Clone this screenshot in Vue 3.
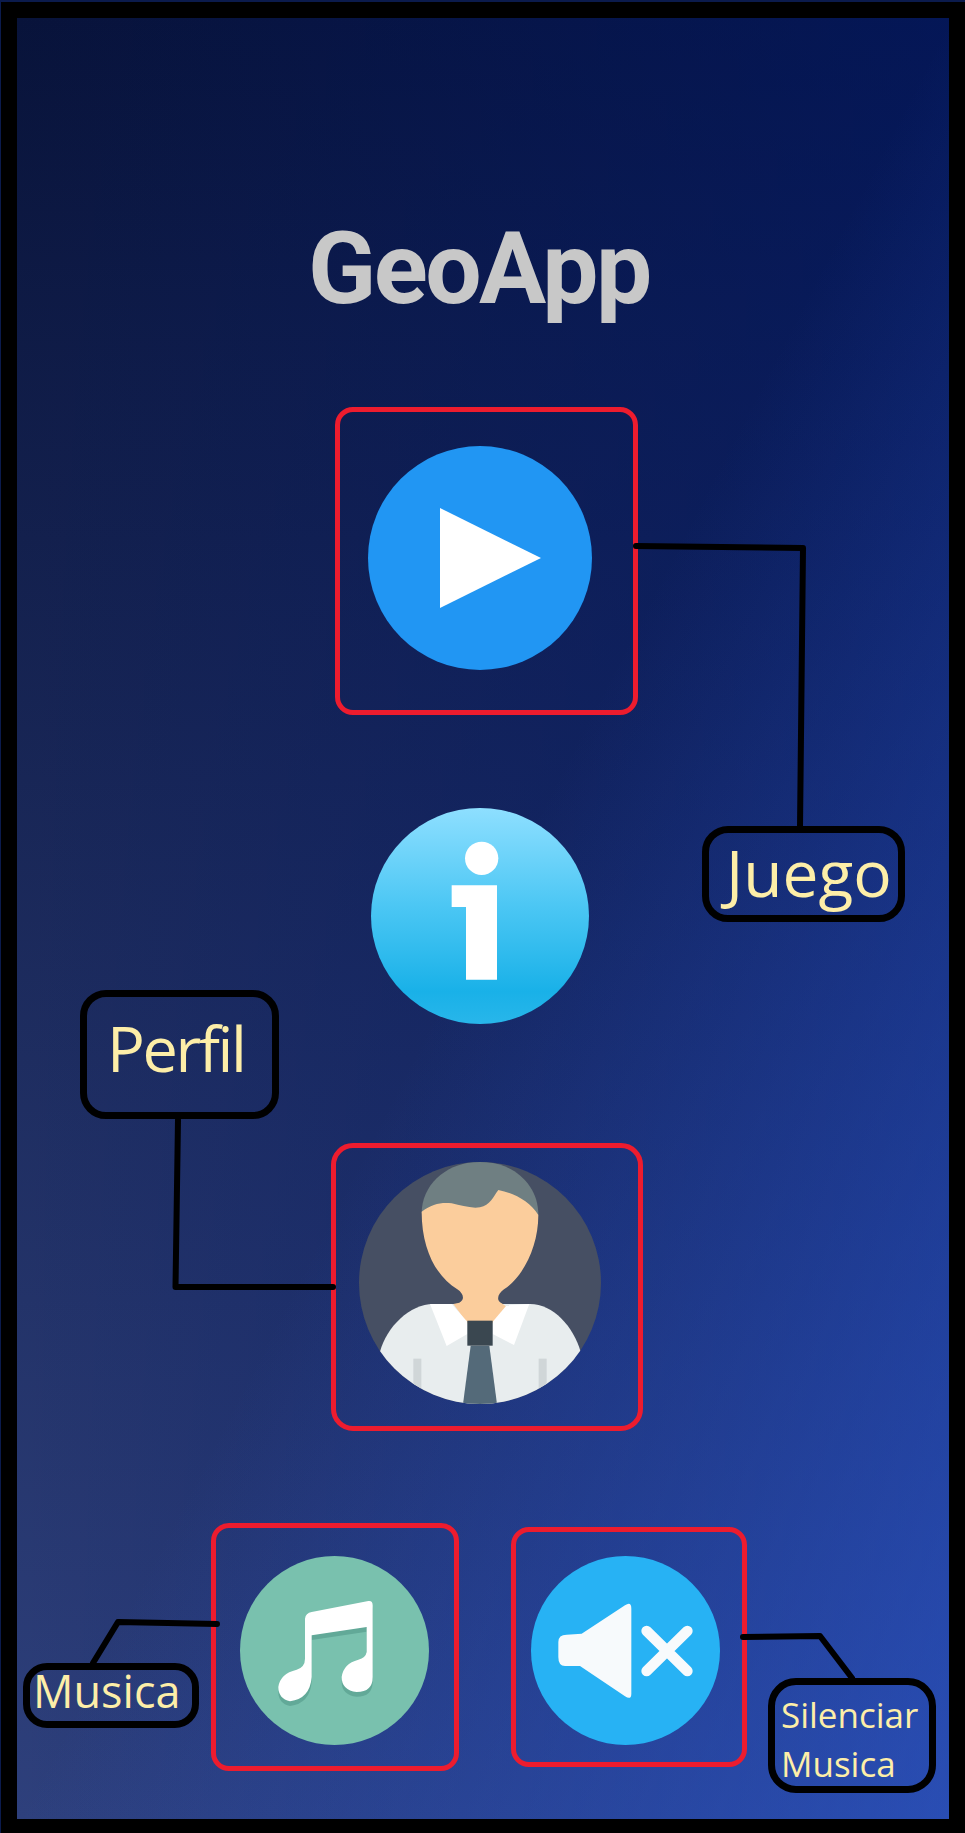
<template>
  <div class="shot">
    <main class="app">
      <h1 class="title">GeoApp</h1>

      <div class="hit hit-play">
        <svg class="icon" width="224" height="224" viewBox="0 0 224 224">
          <circle cx="112" cy="112" r="112" fill="#2196f3" />
          <polygon points="72,62 173,112 72,162" fill="#fff" />
        </svg>
      </div>

      <svg class="info" width="218" height="216" viewBox="93 85 654 648">
        <defs>
          <linearGradient id="infoFill" x1="0" y1="0" x2="0" y2="1">
            <stop offset="0" stop-color="#8edfff" />
            <stop offset="0.45" stop-color="#4cc7f4" />
            <stop offset="0.85" stop-color="#19b1e8" />
            <stop offset="1" stop-color="#28b6ea" />
          </linearGradient>
        </defs>
        <ellipse cx="420" cy="409" rx="327" ry="324" fill="url(#infoFill)" />
        <circle cx="425" cy="236" r="50" fill="#fff" />
        <polygon points="335,317 471,317 471,600 378,600 378,382 335,382" fill="#fff" />
      </svg>

      <div class="hit hit-profile">
        <svg class="icon" width="242" height="242" viewBox="117 96 726 726">
          <defs>
            <clipPath id="avatarClip">
              <circle cx="480" cy="459" r="363" />
            </clipPath>
          </defs>
          <circle cx="480" cy="459" r="363" fill="#464f63" />
          <g clip-path="url(#avatarClip)">
            <path d="M305 250C305 160 385 95 480 95S655 160 655 255L480 330Z" fill="#6f7f82" />
            <path d="M180 665C200 590 270 522 340 522H630C700 522 760 590 782 665L782 830H180Z" fill="#e8edee" />
            <rect x="280" y="686" width="24" height="120" fill="#d0d6d8" />
            <rect x="656" y="686" width="24" height="120" fill="#d0d6d8" />
            <path d="M305 245C335 222 365 216 395 220C425 226 450 236 480 232C510 226 520 200 535 180C585 190 630 215 655 255C655 350 610 440 552 478C535 490 526 510 545 520L560 530L518 580H442L400 522L418 518C436 508 430 490 412 478C350 440 305 360 305 245Z" fill="#fbcd9c" />
            <polygon points="330,522 395,522 442,575 442,612 380,648" fill="#fff" />
            <polygon points="628,522 560,526 518,575 518,612 582,645" fill="#fff" />
            <polygon points="452,647 508,647 532,830 428,830" fill="#546a79" />
            <rect x="442" y="572" width="76" height="75" fill="#3a4750" />
          </g>
        </svg>
      </div>

      <div class="bottom-row">
        <div class="hit hit-music">
          <svg class="icon" width="189" height="189" viewBox="720 167 567 567">
            <circle cx="1003.5" cy="450.5" r="283.5" fill="#79c1ae" />
            <path :d="notePath" fill="#62a998" transform="translate(0 14)" />
            <path :d="notePath" fill="#fff" />
          </svg>
        </div>
        <div class="hit hit-mute">
          <svg class="icon" width="189" height="189" viewBox="123 167 567 567">
            <circle cx="406.5" cy="450.5" r="283.5" fill="#27b2f4" />
            <path d="M205 425Q205 403 230 403L275 400L405 315Q424 302 424 325V580Q424 600 405 588L270 497H225Q205 497 205 470Z" fill="#f7fafc" />
            <path d="M470 392L592 512M592 392L470 512" stroke="#f7fafc" stroke-width="32" stroke-linecap="round" />
          </svg>
        </div>
      </div>
    </main>

    <svg class="wires" width="965" height="1833" viewBox="0 0 965 1833">
      <polyline v-for="wire in wires" :key="wire" :points="wire" class="wire" />
    </svg>

    <div v-for="note in notes" :key="note.id" class="note" :class="note.id">
      <span>{{ note.text }}</span>
    </div>
  </div>
</template>

<script setup>
const notePath =
  "M935 335L1105 302Q1118 300 1118 315V530Q1118 575 1070 575Q1025 570 1025 530Q1030 490 1075 478Q1097 473 1100 455V380L935 405V530Q930 595 870 603Q835 595 835 560Q840 520 890 508Q915 500 915 475V355Q917 338 935 335Z";

const wires = [
  "636,546 803,548 800,828",
  "178,1120 175.5,1287 333,1287",
  "217,1624 118,1622 93,1663",
  "743,1637 820,1636 852,1678",
];

const notes = [
  { id: "juego", text: "Juego" },
  { id: "perfil", text: "Perfil" },
  { id: "musica", text: "Musica" },
  { id: "silenciar", text: "Silenciar Musica" },
];
</script>

<style>
html,
body {
  margin: 0;
  background: #000;
}
</style>

<style scoped>
.shot {
  position: relative;
  width: 965px;
  height: 1833px;
  box-sizing: border-box;
  padding: 18px 16px 14px 17px;
  background: #000;
  box-shadow: inset 1px 2px 0 #0b1b4d;
  overflow: hidden;
}
.app {
  height: 100%;
  box-sizing: border-box;
  padding-top: 201px;
  display: flex;
  flex-direction: column;
  background:
    linear-gradient(to bottom right, transparent 50%, rgba(60, 110, 240, 0.5) 100%),
    linear-gradient(to right, transparent, rgba(0, 26, 115, 0.5)),
    linear-gradient(to bottom, #08133a, #2e407c);
}
.title {
  margin: 0 0 0 291px;
  font-family: Roboto, sans-serif;
  font-size: 100px;
  font-weight: 700;
  line-height: 100px;
  letter-spacing: -2.5px;
  color: #c8c8c8;
}
.hit {
  box-sizing: border-box;
  flex: none;
  border: 5px solid #ed1c2e;
  border-radius: 18px;
}
.icon {
  display: block;
}
.hit-play {
  width: 303px;
  height: 308px;
  margin: 88px 0 0 318px;
  padding: 34px 0 0 28px;
}
.info {
  display: block;
  flex: none;
  margin: 93px 0 0 354px;
}
.hit-profile {
  width: 312px;
  height: 288px;
  margin: 119px 0 0 314px;
  padding: 14px 0 0 23px;
  border-radius: 22px;
}
.bottom-row {
  display: flex;
  align-items: flex-start;
  gap: 52px;
  margin: 92px 0 0 194px;
}
.hit-music {
  width: 248px;
  height: 248px;
  padding: 28px 0 0 24px;
}
.hit-mute {
  width: 236px;
  height: 240px;
  margin-top: 4px;
  padding: 24px 0 0 15px;
}
.wires {
  position: absolute;
  left: 0;
  top: 0;
}
.wire {
  fill: none;
  stroke: #000;
  stroke-width: 6;
  stroke-linecap: round;
  stroke-linejoin: round;
}
.note {
  position: absolute;
  box-sizing: border-box;
  display: flex;
  align-items: center;
  border: 7px solid #000;
  font-family: "Open Sans", sans-serif;
  color: #fdeea8;
}
.juego {
  left: 702px;
  top: 826px;
  width: 203px;
  height: 96px;
  padding: 0 0 4px 17px;
  border-radius: 26px;
  font-size: 64px;
}
.perfil {
  left: 80px;
  top: 990px;
  width: 199px;
  height: 129px;
  padding: 0 0 14px 20px;
  border-radius: 26px;
  font-size: 63px;
  letter-spacing: -2.4px;
}
.musica {
  left: 23px;
  top: 1663px;
  width: 176px;
  height: 65px;
  padding: 0 0 11px 3px;
  border-radius: 24px;
  font-size: 45px;
}
.silenciar {
  left: 768px;
  top: 1678px;
  width: 168px;
  height: 115px;
  padding: 6px 0 0 6px;
  border-radius: 28px;
  font-size: 35px;
  line-height: 49px;
}
</style>
